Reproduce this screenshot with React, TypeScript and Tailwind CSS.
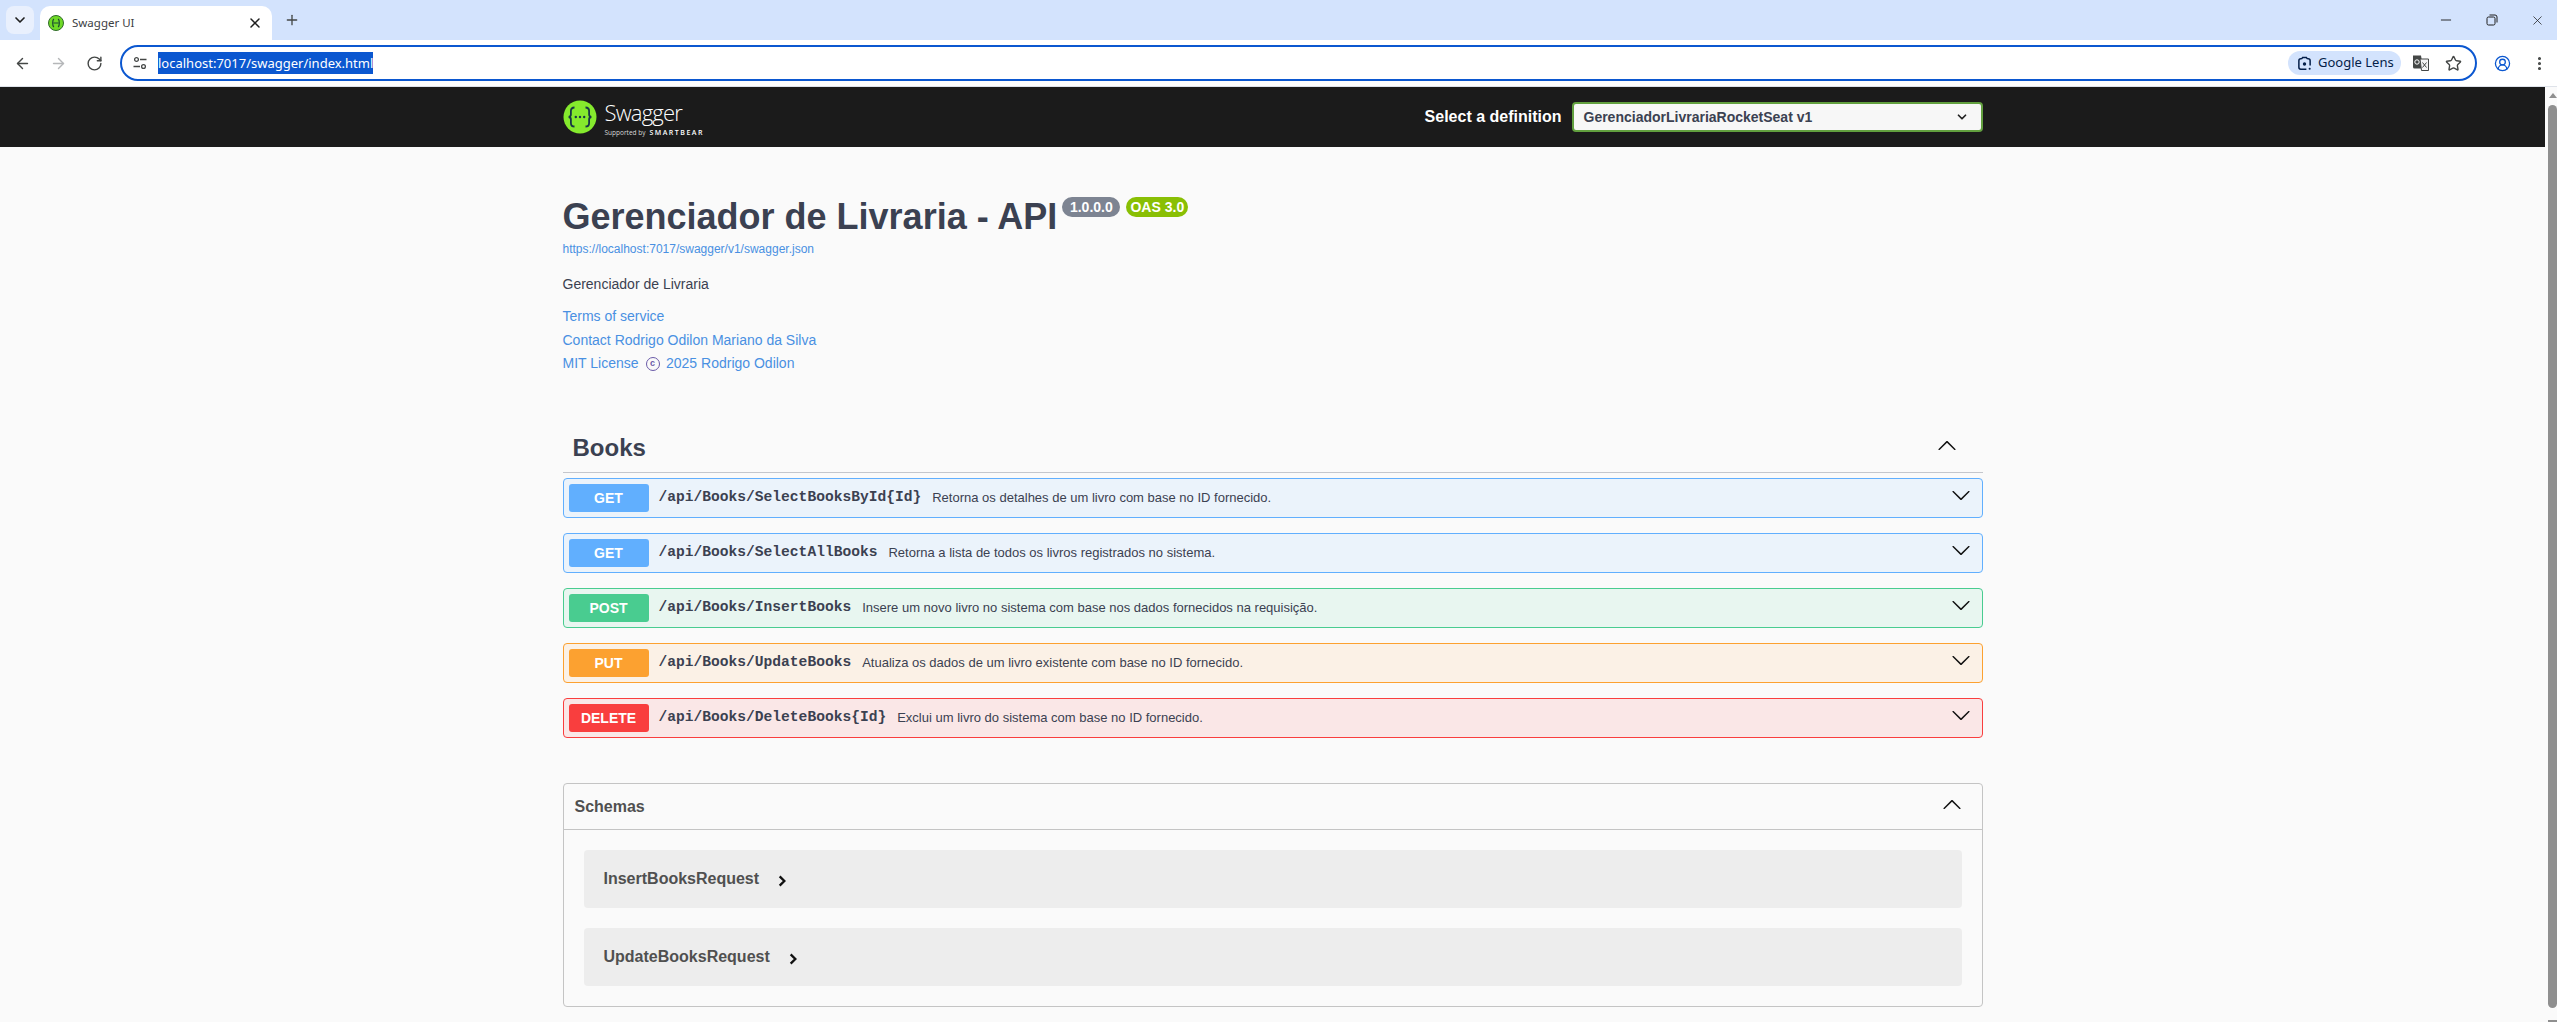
import { ArrowLeft, ArrowRight, ChevronDown, Minus, Plus, RotateCw, Star, X, EllipsisVertical, CircleUserRound } from 'lucide-react';

const rowStyles = {
  GET: { row: 'border-[#61affe] bg-[#ebf3fb]', badge: 'bg-[#61affe]' },
  POST: { row: 'border-[#49cc90] bg-[#e8f6f0]', badge: 'bg-[#49cc90]' },
  PUT: { row: 'border-[#fca130] bg-[#fbf1e6]', badge: 'bg-[#fca130]' },
  DELETE: { row: 'border-[#f93e3e] bg-[#fae7e7]', badge: 'bg-[#f93e3e]' },
};

const operations = [
  { method: 'GET', path: '/api/Books/SelectBooksById{Id}', summary: 'Retorna os detalhes de um livro com base no ID fornecido.' },
  { method: 'GET', path: '/api/Books/SelectAllBooks', summary: 'Retorna a lista de todos os livros registrados no sistema.' },
  { method: 'POST', path: '/api/Books/InsertBooks', summary: 'Insere um novo livro no sistema com base nos dados fornecidos na requisição.' },
  { method: 'PUT', path: '/api/Books/UpdateBooks', summary: 'Atualiza os dados de um livro existente com base no ID fornecido.' },
  { method: 'DELETE', path: '/api/Books/DeleteBooks{Id}', summary: 'Exclui um livro do sistema com base no ID fornecido.' },
] as const;

function ArrowDownIcon() {
  return (
    <svg viewBox="0 0 20 20" className="mb-[6px] h-5 w-5 fill-[#111]">
      <path d="M17.418 6.109c.272-.268.709-.268.979 0s.271.701 0 .969l-7.908 7.83c-.27.268-.707.268-.979 0l-7.908-7.83c-.27-.268-.27-.701 0-.969.271-.268.709-.268.979 0L10 13.25l7.418-7.141z" />
    </svg>
  );
}

function ArrowUpIcon() {
  return (
    <svg viewBox="0 0 20 20" className="mb-[5px] h-5 w-5 fill-[#111]">
      <path d="M 17.418 14.908c.272.268.709.268.979 0s.271-.701 0-.969l-7.908-7.83c-.27-.268-.707-.268-.979 0l-7.908 7.83c-.27.268-.27.701 0 .969.271.268.709.268.979 0L10 7.77l7.418 7.138z" />
    </svg>
  );
}

function SwaggerMark({ className }: { className: string }) {
  return (
    <svg viewBox="0 0 34 34" className={className}>
      <circle cx="17" cy="17" r="16.5" fill="#85ea2d" />
      <path d="M11.5 7.5c-3 0-3.6 1.4-3.6 3.6v3.4c0 1.4-.8 2.3-2.2 2.5 1.4.2 2.2 1.1 2.2 2.5v3.4c0 2.2.6 3.6 3.6 3.6M22.5 7.5c3 0 3.6 1.4 3.6 3.6v3.4c0 1.4.8 2.3 2.2 2.5-1.4.2-2.2 1.1-2.2 2.5v3.4c0 2.2-.6 3.6-3.6 3.6" fill="none" stroke="#173647" strokeWidth="1.8" />
      <circle cx="12.8" cy="17" r="1.2" fill="#173647" />
      <circle cx="17" cy="17" r="1.2" fill="#173647" />
      <circle cx="21.2" cy="17" r="1.2" fill="#173647" />
    </svg>
  );
}

function Favicon() {
  return (
    <svg viewBox="0 0 16 16" className="h-4 w-4">
      <circle cx="8" cy="8" r="7.5" fill="#6fd926" stroke="#2f6b2a" strokeWidth="1" />
      <path d="M5.8 3.8C4.3 5.5 4.3 10.5 5.8 12.2M10.2 3.8c1.5 1.7 1.5 6.7 0 8.4M5.5 8h5" fill="none" stroke="#1d4a33" strokeWidth="1.2" />
    </svg>
  );
}

function TabStrip() {
  return (
    <div className="flex h-10 items-end bg-[#d3e3fd] font-['Noto_Sans',sans-serif]">
      <div className="mb-[6px] ml-[6px] flex h-7 w-7 items-center justify-center rounded-lg bg-[#e9f0fd]">
        <ChevronDown className="h-4 w-4 text-[#1f1f1f]" strokeWidth={2.5} />
      </div>
      <div className="ml-[6px] flex h-[34px] w-[232px] items-center rounded-t-[10px] bg-white pl-[8px] pr-[9px]">
        <Favicon />
        <span className="ml-[8px] flex-1 text-[11.5px] text-[#3c4043]">Swagger UI</span>
        <X className="h-4 w-4 text-[#1f1f1f]" strokeWidth={2.2} />
      </div>
      <div className="mb-[6px] ml-[6px] flex h-7 w-7 items-center justify-center">
        <Plus className="h-4 w-4 text-[#444746]" strokeWidth={2} />
      </div>
      <div className="mb-[6px] ml-auto flex h-7 items-center gap-[32px] pr-[12px] text-[#1f1f1f]">
        <Minus className="h-4 w-4" strokeWidth={1.4} />
        <svg viewBox="0 0 12 12" className="h-[12px] w-[12px] fill-none stroke-[#1f1f1f]">
          <rect x="1" y="3" width="8" height="8" rx="1.5" />
          <path d="M3.5 1h5.5a2 2 0 0 1 2 2v5.5" />
        </svg>
        <X className="h-[15px] w-[15px]" strokeWidth={1.2} />
      </div>
    </div>
  );
}

function Toolbar() {
  return (
    <div className="flex h-[47px] items-center border-b border-[#dfe3ea] bg-white font-['Noto_Sans',sans-serif]">
      <div className="flex w-[120px] items-center gap-[19px] pl-[14px]">
        <ArrowLeft className="h-[17px] w-[17px] text-[#444746]" strokeWidth={2} />
        <ArrowRight className="h-[17px] w-[17px] text-[#b5b7b9]" strokeWidth={2} />
        <RotateCw className="h-[17px] w-[17px] text-[#444746]" strokeWidth={2} />
      </div>
      <div className="flex h-9 w-[2357px] items-center rounded-full border-2 border-[#0b57d0] bg-white pl-[10px] pr-[13px]">
        <svg viewBox="0 0 16 16" className="h-4 w-4 fill-none stroke-[#444746]" strokeWidth="1.3">
          <circle cx="4.5" cy="4.5" r="1.9" />
          <circle cx="11.5" cy="11.5" r="1.9" />
          <path d="M8 4.5h6.5M1.5 11.5H8" />
        </svg>
        <span className="ml-[10px] flex h-[22px] items-center bg-[#0b57d0] text-[13px] leading-none text-white">localhost:7017/swagger/index.html</span>
        <div className="ml-auto flex h-6 w-[113px] items-center gap-[6px] rounded-full bg-[#d3e3fd] pl-[9px]">
          <svg viewBox="0 0 16 16" className="h-[15px] w-[15px] fill-none stroke-[#041e49]" strokeWidth="1.6">
            <path d="M5 3H4a2 2 0 0 0-2 2v7a2 2 0 0 0 2 2h6M11 3h1a2 2 0 0 1 2 2v5M5 3l1-1.5h4l1 1.5" />
            <circle cx="8" cy="8.5" r="1.8" fill="#041e49" stroke="none" />
            <circle cx="13.5" cy="13.5" r="1.1" fill="#041e49" stroke="none" />
          </svg>
          <span className="text-[13px] text-[#041e49]">Google Lens</span>
        </div>
        <svg viewBox="0 0 18 18" className="ml-[11px] h-[18px] w-[18px]">
          <path d="M1 1.5h8l.5 3v10H2.5a1.5 1.5 0 0 1-1.5-1.5z" fill="#444746" />
          <path d="M8 5h8.5v11.5H9.5z" fill="#f4f4f4" stroke="#444746" />
          <circle cx="5" cy="8" r="2.2" fill="none" stroke="#fff" strokeWidth="1" />
          <path d="M10.5 8.5l4 5M14.5 8.5l-4 5" stroke="#444746" strokeWidth="1" />
        </svg>
        <Star className="ml-[15px] h-[17px] w-[17px] text-[#444746]" strokeWidth={2} />
      </div>
      <div className="flex flex-1 items-center justify-between pl-[17px] pr-[9px]">
        <CircleUserRound className="h-[17px] w-[17px] text-[#0b57d0]" strokeWidth={1.8} />
        <EllipsisVertical className="h-[17px] w-[17px] text-[#444746]" strokeWidth={2.4} />
      </div>
    </div>
  );
}

function Scrollbar() {
  return (
    <div className="flex w-3 flex-col items-end bg-[#fafafa]">
      <div className="mt-[6px] h-0 w-0 border-x-[4.5px] border-b-[5px] border-x-transparent border-b-[#8f8f8f]" />
      <div className="mt-[7px] w-[9px] flex-1 rounded-b-full rounded-t-full bg-[#8f8f8f]" />
      <div className="mt-[12px] h-[2px] w-[9px] bg-[#8f8f8f]" />
    </div>
  );
}

function TopBar() {
  return (
    <div className="h-[60px] bg-[#1b1b1b]">
      <div className="mx-auto flex h-full w-[1420px] items-center justify-between">
        <div className="flex items-center">
          <SwaggerMark className="h-[34px] w-[34px]" />
          <div className="ml-[8px] flex flex-col pt-[3px]">
            <span className="font-['Open_Sans',sans-serif] text-[22px] leading-[24px] font-light tracking-[-0.8px] text-white">Swagger</span>
            <span className="mt-[5px] flex h-2 items-center whitespace-nowrap font-['Open_Sans',sans-serif] text-[6.5px] leading-[8px] text-[#d8d8d8]">
              Supported by <b className="ml-[4px] text-[7px] font-semibold tracking-[1.5px] text-white">SMARTBEAR</b>
            </span>
          </div>
        </div>
        <div className="flex items-center">
          <span className="text-base font-bold text-white">Select a definition</span>
          <div className="ml-[10px] flex h-[30px] w-[411px] items-center justify-between rounded border-2 border-[#62a03f] bg-[#f7f7f7] pl-[10px] pr-[12px]">
            <span className="text-sm font-bold text-[#3b4151]">GerenciadorLivrariaRocketSeat v1</span>
            <ChevronDown className="h-[14px] w-[14px] text-[#222]" strokeWidth={3} />
          </div>
        </div>
      </div>
    </div>
  );
}

function Info() {
  return (
    <div className="pt-[50px] text-[#3b4151]">
      <div className="flex h-[42px] items-start">
        <h1 className="text-4xl leading-[40px] font-bold">Gerenciador de Livraria - API</h1>
        <span className="ml-[5px] flex h-5 w-[58px] items-center justify-center rounded-full bg-[#7d8492] text-sm font-bold text-white">1.0.0.0</span>
        <span className="ml-[6px] flex h-5 w-[62px] items-center justify-center rounded-full bg-[#89bf04] text-sm font-bold text-white">OAS 3.0</span>
      </div>
      <a className="mt-[3px] block text-xs leading-[14px] text-[#4990e2]">https://localhost:7017/swagger/v1/swagger.json</a>
      <p className="mt-[20px] text-sm leading-[16px]">Gerenciador de Livraria</p>
      <div className="mt-[16px] flex flex-col gap-[6.5px] text-sm leading-[17px] text-[#4990e2]">
        <a>Terms of service</a>
        <a>Contact Rodrigo Odilon Mariano da Silva</a>
        <a className="flex items-center">
          MIT License
          <span className="ml-[7px] mr-[6.5px] flex h-[14px] w-[14px] items-center justify-center rounded-full border-[1.5px] border-[#6a5aa8] text-[9px] leading-none font-bold text-[#6a5aa8]">c</span>
          2025 Rodrigo Odilon
        </a>
      </div>
    </div>
  );
}

function Operation({ method, path, summary }: (typeof operations)[number]) {
  const style = rowStyles[method];
  return (
    <div className={`flex h-10 items-center rounded border pl-[5px] pr-[11px] ${style.row}`}>
      <span className={`flex h-[28px] w-20 items-center justify-center rounded-[3px] text-sm font-bold text-white ${style.badge}`}>{method}</span>
      <span className="ml-[10px] font-['Liberation_Mono',monospace] text-[14.6px] font-bold text-[#3b4151]">{path}</span>
      <span className="ml-[11px] flex-1 text-[13px] text-[#3b4151]">{summary}</span>
      <ArrowDownIcon />
    </div>
  );
}

function Books() {
  return (
    <section className="mt-[51px]">
      <div className="flex h-[50px] items-center justify-between border-b border-[#c4c6cc] pl-[10px] pr-[26px]">
        <h3 className="text-2xl font-bold text-[#3b4151]">Books</h3>
        <ArrowUpIcon />
      </div>
      <div className="mt-[5px] flex flex-col gap-[15px]">
        {operations.map((op) => (
          <Operation key={op.path} {...op} />
        ))}
      </div>
    </section>
  );
}

function Schemas() {
  return (
    <section className="mt-[45px] rounded border border-[#c4c4c4]">
      <div className="flex h-[46px] items-center justify-between border-b border-[#c4c4c4] pl-[11px] pr-[20px]">
        <h4 className="text-base font-bold text-[#505050]">Schemas</h4>
        <ArrowUpIcon />
      </div>
      <div className="flex flex-col gap-5 px-5 py-5">
        {['InsertBooksRequest', 'UpdateBooksRequest'].map((name) => (
          <div key={name} className="flex h-[58px] items-center rounded bg-[#ededed] pl-5">
            <span className="text-base font-bold text-[#505050]">{name}</span>
            <svg viewBox="0 0 24 24" className="ml-[16px] mt-[3px] h-[14px] w-[14px] fill-none stroke-[#111]" strokeWidth="4">
              <path d="M8 4l8 8-8 8" />
            </svg>
          </div>
        ))}
      </div>
    </section>
  );
}

export default function App() {
  return (
    <div className="flex h-screen flex-col overflow-hidden bg-[#fafafa] font-['Liberation_Sans',Arial,sans-serif]">
      <TabStrip />
      <Toolbar />
      <div className="flex min-h-0 flex-1">
        <main className="min-w-0 flex-1 overflow-hidden">
          <TopBar />
          <div className="mx-auto w-[1420px]">
            <Info />
            <Books />
            <Schemas />
          </div>
        </main>
        <Scrollbar />
      </div>
    </div>
  );
}
